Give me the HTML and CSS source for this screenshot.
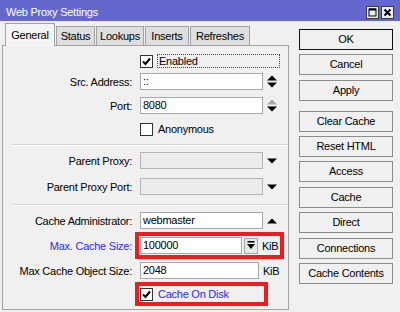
FILE: index.html
```html
<!DOCTYPE html>
<html lang="en">
<head>
    <meta charset="UTF-8">
    <title>Web Proxy Settings</title>
    <link rel="stylesheet" href="styles.css">
</head>
<body>
<div class="window">
    <div class="titlebar">
        <span class="title">Web Proxy Settings</span>
        <span class="tb-btns">
            <span class="tb-btn"><svg width="11" height="11" viewBox="0 0 11 11"><rect x="2" y="2" width="7" height="7" fill="none" stroke="#000" stroke-width="1"/><line x1="2" y1="2.5" x2="9" y2="2.5" stroke="#000" stroke-width="2"/></svg></span>
            <span class="tb-btn"><svg width="11" height="11" viewBox="0 0 11 11"><path d="M2.5 2.5 L8.5 8.5 M8.5 2.5 L2.5 8.5" stroke="#000" stroke-width="2"/></svg></span>
        </span>
    </div>
    <div class="body">
        <div class="main">
            <div class="tabs">
                <span class="tab active t-general">General</span>
                <span class="tab t-status">Status</span>
                <span class="tab t-lookups">Lookups</span>
                <span class="tab t-inserts">Inserts</span>
                <span class="tab t-refreshes">Refreshes</span>
            </div>
            <div class="panel">
                <div class="row check r-enabled">
                    <span class="lbl"></span>
                    <span class="box"><svg width="11" height="11" viewBox="0 0 11 11"><path d="M2 5.5 L4.5 8 L9 2.5" fill="none" stroke="#000" stroke-width="2"/></svg></span>
                    <span class="clabel focus">Enabled</span>
                </div>
                <div class="row r-src">
                    <span class="lbl">Src. Address:</span>
                    <span class="field">::</span>
                    <svg class="ico" width="10" height="13" viewBox="0 0 10 13"><polygon points="0,5.5 5,0.5 10,5.5" fill="#000"/><polygon points="0,7.5 5,12.5 10,7.5" fill="#000"/></svg>
                </div>
                <div class="row r-port">
                    <span class="lbl">Port:</span>
                    <span class="field">8080</span>
                    <svg class="ico" width="10" height="13" viewBox="0 0 10 13"><polygon points="0,5.5 5,0.5 10,5.5" fill="#a8a8a8"/><polygon points="0,7.5 5,12.5 10,7.5" fill="#000"/></svg>
                </div>
                <div class="row check r-anon">
                    <span class="lbl"></span>
                    <span class="box"></span>
                    <span class="clabel">Anonymous</span>
                </div>
                <div class="sep s-one"></div>
                <div class="row r-parent">
                    <span class="lbl">Parent Proxy:</span>
                    <span class="field off"></span>
                    <svg class="ico" width="10" height="6" viewBox="0 0 10 6"><polygon points="0,0.5 10,0.5 5,5.5" fill="#000"/></svg>
                </div>
                <div class="row r-pport">
                    <span class="lbl">Parent Proxy Port:</span>
                    <span class="field off"></span>
                    <svg class="ico" width="10" height="6" viewBox="0 0 10 6"><polygon points="0,0.5 10,0.5 5,5.5" fill="#000"/></svg>
                </div>
                <div class="sep s-two"></div>
                <div class="row r-admin">
                    <span class="lbl">Cache Administrator:</span>
                    <span class="field">webmaster</span>
                    <svg class="ico" width="10" height="6" viewBox="0 0 10 6"><polygon points="0,5.5 10,5.5 5,0.5" fill="#000"/></svg>
                </div>
                <div class="row r-max">
                    <span class="lbl blue">Max. Cache Size:</span>
                    <span class="marked wide">
                        <span class="field short">100000</span>
                        <span class="spin-btn"><svg width="8" height="9" viewBox="0 0 8 9"><rect x="0.5" y="0" width="7" height="1.5" fill="#000"/><polygon points="0,3 8,3 4,8" fill="#000"/></svg></span>
                        <span class="unit">KiB</span>
                    </span>
                </div>
                <div class="row r-obj">
                    <span class="lbl">Max Cache Object Size:</span>
                    <span class="field mid">2048</span>
                    <span class="unit">KiB</span>
                </div>
                <div class="row check r-disk">
                    <span class="lbl"></span>
                    <span class="marked disk">
                        <span class="box"><svg width="11" height="11" viewBox="0 0 11 11"><path d="M2 5.5 L4.5 8 L9 2.5" fill="none" stroke="#000" stroke-width="2"/></svg></span>
                        <span class="clabel blue">Cache On Disk</span>
                    </span>
                </div>
            </div>
        </div>
        <div class="actions">
            <span class="btn default">OK</span>
            <span class="btn">Cancel</span>
            <span class="btn">Apply</span>
            <span class="btn spaced">Clear Cache</span>
            <span class="btn">Reset HTML</span>
            <span class="btn">Access</span>
            <span class="btn">Cache</span>
            <span class="btn">Direct</span>
            <span class="btn">Connections</span>
            <span class="btn">Cache Contents</span>
        </div>
    </div>
</div>
</body>
</html>
```

FILE: styles.css
```css
body {
    margin: 0;
    font-family: "Liberation Sans", Arial, sans-serif;
    font-size: 11px;
    letter-spacing: -0.25px;
    color: #000;
}
.window {
    width: 400px;
    height: 312px;
    background: #f0f0f0;
    display: flex;
    flex-direction: column;
    overflow: hidden;
}
.titlebar {
    height: 21px;
    flex: none;
    box-sizing: border-box;
    background: #6467cc;
    color: #fff;
    display: flex;
    align-items: flex-end;
    justify-content: space-between;
    padding: 0 6px 2px 6px;
}
.title {
    line-height: 13px;
}
.tb-btns {
    display: flex;
    gap: 2px;
}
.tb-btn {
    width: 13px;
    height: 13px;
    box-sizing: border-box;
    border: 1px solid #3a3a3a;
    background: #ececec;
    display: flex;
}
.body {
    flex: 1;
    display: flex;
}
.main {
    width: 289px;
    box-sizing: border-box;
    padding: 2px 0 2px 2px;
    display: flex;
    flex-direction: column;
}
/* tabs */
.tabs {
    height: 22px;
    display: flex;
    align-items: flex-end;
    padding-left: 3px;
}
.tab {
    height: 19px;
    box-sizing: border-box;
    border: 1px solid #a3a3a3;
    border-bottom: none;
    background: #dedede;
    line-height: 18px;
    text-align: center;
    margin-left: 1px;
}
.tab.active {
    height: 23px;
    margin: 0 0 -1px 0;
    background: #f4f4f4;
    position: relative;
    z-index: 1;
    line-height: 22px;
}
.t-general { width: 50px; }
.t-status { width: 39px; }
.t-lookups { width: 48px; }
.t-inserts { width: 44px; }
.t-refreshes { width: 60px; }
.panel {
    flex: 1;
    border: 1px solid #a3a3a3;
    background: #f0f0f0;
    padding-top: 8px;
}
/* form rows */
.row {
    display: flex;
    align-items: center;
    height: 17px;
}
.lbl {
    width: 137px;
    flex: none;
    box-sizing: border-box;
    padding-right: 8px;
    text-align: right;
    white-space: nowrap;
}
.blue {
    color: #2a2af0;
}
.field {
    width: 123px;
    height: 17px;
    flex: none;
    box-sizing: border-box;
    border: 1px solid #a8a8a8;
    background: #fff;
    padding-left: 2px;
    line-height: 15px;
}
.field.off {
    background: #ececec;
    border-color: #b4b4b4;
}
.field.short {
    width: 102px;
}
.field.mid {
    width: 119px;
}
.ico {
    margin-left: 4px;
    flex: none;
}
.unit {
    margin-left: 4px;
}
.spin-btn {
    width: 14px;
    height: 16px;
    box-sizing: border-box;
    border: 1px solid #a8a8a8;
    background: #e8e8e8;
    margin-left: 2px;
    display: flex;
    align-items: center;
    justify-content: center;
}
.check {
    height: 14px;
}
.box {
    width: 13px;
    height: 13px;
    flex: none;
    box-sizing: border-box;
    border: 1px solid #333;
    background: #fff;
    display: flex;
}
.clabel {
    margin-left: 4px;
    padding-left: 1px;
    height: 14px;
    line-height: 14px;
    box-sizing: border-box;
}
.clabel.focus {
    width: 123px;
    border: 1px dotted #444;
    line-height: 12px;
}
.marked {
    display: flex;
    align-items: center;
    outline: 4px solid #ee1c1c;
    outline-offset: 1px;
}
.marked.wide {
    height: 17px;
    padding: 0 1px 0 0;
}
.marked.disk {
    width: 123px;
}
.sep {
    margin-left: 9px;
    height: 0;
    border-top: 1px solid #d6d6d6;
    border-bottom: 1px solid #fff;
}
.r-src { margin-top: 5px; }
.r-port { margin-top: 7px; }
.r-anon { margin-top: 8px; }
.s-one { margin-top: 8px; }
.r-parent { margin-top: 6px; }
.r-pport { margin-top: 9px; }
.s-two { margin-top: 9px; }
.r-admin { margin-top: 6px; }
.r-max { margin-top: 8px; }
.r-obj { margin-top: 8px; }
.r-disk { margin-top: 8px; }
/* right column buttons */
.actions {
    flex: 1;
    display: flex;
    flex-direction: column;
    gap: 4.4px;
    padding: 8px 0 0 10px;
}
.btn {
    width: 94px;
    height: 21px;
    box-sizing: border-box;
    border: 1px solid #8c8c8c;
    background: #f0f0f0;
    text-align: center;
    line-height: 19px;
}
.btn.default {
    border-color: #111;
}
.btn.spaced {
    margin-top: 5.5px;
}
```
